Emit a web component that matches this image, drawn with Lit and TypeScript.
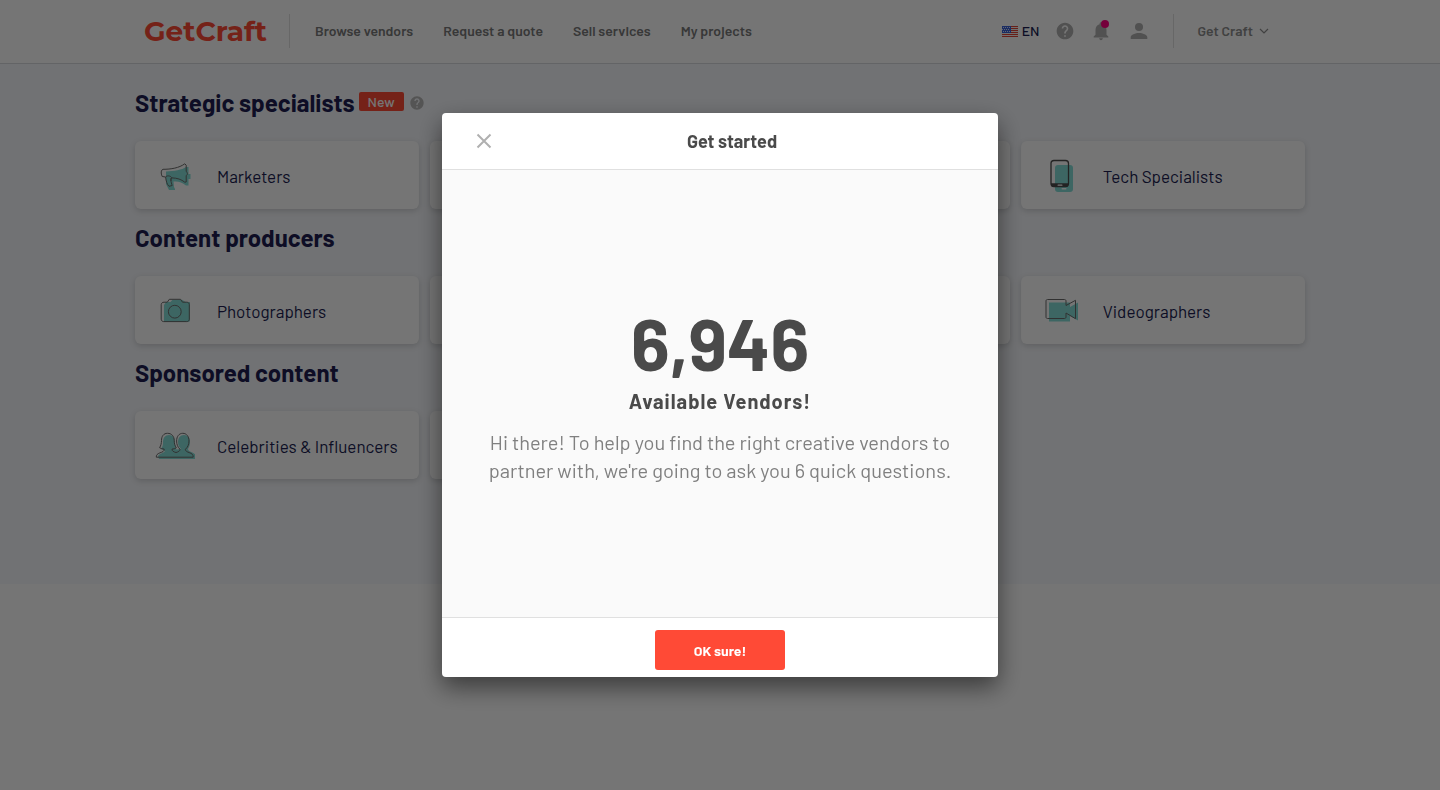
import { LitElement, html, css, svg, nothing, type TemplateResult } from "lit";
import { customElement, property } from "lit/decorators.js";

const icons: Record<string, TemplateResult> = {
  marketers: svg`
    <path class="tint" d="M11 16.5C19 16 27 15 31 12h2.5v7h2v5h-2v6.500h-2.500c-4-3.500-8-4.500-12.500-4l.5 5.500 1 2v1h-6l-3-6z"/>
    <path class="line" d="M8 14.300C16 14.300 24 13 29.800 8.800l1.400 1.400v6.300c1.600.8 1.600 3.200 0 4.200v6.300l-1.400.2c-3.300-2.700-7.800-4.300-12.800-4.300-2 1-1 4 .2 7.600l-3.200.8c-1.800-1.700-3-5-3.400-9.300M8 14.300c-2.200.6-2.300 4-.8 7.200l3.400.5c1-1.500 4.500-1.800 6.400.9M16 23v3"/>`,
  phone: svg`
    <rect class="tint" x="14" y="10" width="18" height="27" rx="3"/>
    <rect class="hole" x="20.500" y="33" width="5" height="1.600" rx=".8"/>
    <rect class="line strong" x="10" y="5.500" width="17.500" height="26" rx="3"/>
    <path class="solid" d="M10 28.200h17.500v1.300a2.600 2.600 0 0 1-2.600 2.500H12.600a2.600 2.600 0 0 1-2.600-2.500z"/>
    <rect class="hole" x="16.500" y="29.600" width="5" height="1.200" rx=".6"/>`,
  camera: svg`
    <path class="tint" d="M11 12h4.500l2-2.200h9.500l3.500 2.200h4.500v18a2 2 0 0 1-2 2H9V15z"/>
    <path class="line" d="M9 12.200h3.300l2-2.900h11.200l2 2.900h4.200c1.500 0 2.600 1 2.600 2.500v14.500c0 1.400-1.100 2.400-2.500 2.400H8.700c-1.400 0-2.500-1-2.500-2.400V14.700c0-1.500 1.200-2.500 2.800-2.500z"/>
    <circle class="line" cx="19.800" cy="21.700" r="6.400"/>`,
  video: svg`
    <path class="tint" d="M8 12.500h21v4.500l8-4.500v18l-8-4.500v5.500H8z"/>
    <path class="line" d="M6.500 9.500h17c.8 0 1.500.5 1.500 1.500v4.500l9.500-5.200v18.400L25 23v4c0 1-.7 1.500-1.500 1.500h-17c-.9 0-1.500-.5-1.500-1.500V11c0-1 .6-1.500 1.500-1.500z"/>`,
  people: svg`
    <path class="tint" d="M14 10c4 0 6 3.500 6 8 0 3 1 5 1.500 6.500l4.500-.5c-2-2-3-4-3-7 0-4 2-7 6-7s6 3 6 7c0 3-1 5-2 7 0 3 7 3 8 7 .3 1.500 0 3-1 3H4l-1-3c2-3 6-3 7-5l-4-2c2-3 2-4.500 2-7 0-4 2-7 6-7z"/>
    <path class="line" d="M12.500 8.300c-4 0-6 3-6 7.200 0 2.700-.6 5-1.900 7.200 1.300.9 3 1.300 4.600 1.300 0 2.500-1.700 3-4.400 3.900C2.500 28.800 1 30 1.300 32.200h36.900c.2-2.500-1.400-3.800-4-4.600-2.300-.8-3.700-1.400-3.800-3.300 2.300-2 3.600-4.900 3.600-8.300 0-4.500-2.400-7.700-6.200-7.700S21.600 11.500 21.600 16c0 3.400 1.200 6.300 3.400 8.200-.1 2-1.700 2.700-4 3.300-2.400-.7-4-1.300-4-3.400 1.600 0 3-.4 4.300-1.300-1.500-2.200-2.100-4.500-2.100-7.300 0-4.200-2.500-7.200-6.700-7.200z"/>`,
};

const helpPath =
  "M12 2C6.480 2 2 6.480 2 12s4.480 10 10 10 10-4.480 10-10S17.520 2 12 2zm1 17h-2v-2h2v2zm2.070-7.750l-.9.920C13.450 12.900 13 13.500 13 15h-2v-.5c0-1.100.45-2.100 1.170-2.830l1.240-1.260c.37-.36.59-.86.59-1.410 0-1.100-.9-2-2-2s-2 .9-2 2H8c0-2.210 1.790-4 4-4s4 1.790 4 4c0 .88-.36 1.680-.93 2.250z";

@customElement("category-card")
class CategoryCard extends LitElement {
  @property() label = "";
  @property() icon = "";

  static styles = css`
    :host { display: block; }
    .card {
      display: flex;
      align-items: center;
      gap: 22px;
      height: 68px;
      box-sizing: border-box;
      padding: 0 20px;
      border-radius: 6px;
      background: #fff;
      box-shadow: 0 2px 6px rgba(0, 0, 0, 0.16);
      color: #201e52;
      font-size: 17px;
      line-height: 24px;
      text-decoration: none;
      white-space: nowrap;
    }
    .text { padding-top: 1px; }
    .icon { width: 40px; height: 40px; flex: none; }
    .tint { fill: #86dfd8; }
    .line { fill: none; stroke: #6c6c6c; stroke-width: 1; stroke-linejoin: round; }
    .strong { stroke: #4c4c4c; stroke-width: 1.3; }
    .solid { fill: #4c4c4c; }
    .hole { fill: #fff; }
  `;

  render() {
    if (!this.label) return html`<div class="card"></div>`;
    return html`<a class="card" href="#">
      <svg class="icon" viewBox="0 0 40 40" aria-hidden="true">${icons[this.icon]}</svg>
      <span class="text">${this.label}</span>
    </a>`;
  }
}

interface Section {
  title: string;
  isNew?: boolean;
  cards: { label: string; icon: string }[];
}

const blank = { label: "", icon: "" };
const sections: Section[] = [
  {
    title: "Strategic specialists",
    isNew: true,
    cards: [{ label: "Marketers", icon: "marketers" }, blank, blank, { label: "Tech Specialists", icon: "phone" }],
  },
  {
    title: "Content producers",
    cards: [{ label: "Photographers", icon: "camera" }, blank, blank, { label: "Videographers", icon: "video" }],
  },
  {
    title: "Sponsored content",
    cards: [{ label: "Celebrities & Influencers", icon: "people" }, blank],
  },
];

@customElement("app-root")
class AppRoot extends LitElement {
  static styles = css`
    :host {
      display: block;
      min-height: 100vh;
      background: #fff;
      font-family: Barlow, Roboto, sans-serif;
    }
    button { font-family: inherit; border: 0; padding: 0; background: none; cursor: pointer; }
    svg { display: block; }
    .wrap { max-width: 1170px; margin: 0 auto; box-sizing: border-box; }

    .top { border-bottom: 1px solid #d8dade; }
    .bar { display: flex; align-items: center; height: 63px; padding: 0 35px 1px 9px; }
    .logo {
      min-width: 125px;
      font: 700 28px/40px Montserrat, Poppins, Lato, sans-serif;
      color: #ff4a36;
      text-decoration: none;
      padding-right: 20px;
    }
    .rule { width: 1px; height: 34px; background: #e0e0e0; }
    .nav { display: flex; gap: 30px; margin-left: 25px; flex: 1; }
    .link { font-size: 14px; line-height: 20px; font-weight: 600; color: #7a7a7a; text-decoration: none; white-space: nowrap; }
    .tools { display: flex; align-items: center; gap: 15px; }
    .tool { color: #b0b0b0; }
    .tool svg { fill: currentColor; }
    .lang { display: flex; align-items: center; gap: 4px; font-size: 14px; line-height: 20px; font-weight: 500; color: #201e52; }
    .bell { position: relative; }
    .dot { position: absolute; top: 0; right: 3px; width: 8px; height: 8px; border-radius: 50%; background: #ff0080; }
    .account {
      display: flex;
      align-items: center;
      gap: 5px;
      font-size: 14px;
      line-height: 20px;
      font-weight: 600;
      color: #8e8e8e;
    }
    .tools .rule { margin-left: 7px; }
    .tools .account { margin-left: 9px; }

    .page { background: #f6f8fc; padding: 20px 0 105px; }
    .section { margin-bottom: 10px; }
    .section:last-child { margin-bottom: 0; }
    .heading { display: flex; align-items: flex-start; gap: 4px; height: 57px; }
    .title { margin: 0; font-size: 24px; line-height: 38px; font-weight: 700; color: #201e52; }
    .badge {
      margin-top: 8px;
      width: 45px;
      border-radius: 2px;
      background: #ff4a36;
      color: #fff;
      font-size: 14px;
      line-height: 19px;
      font-weight: 500;
      text-align: center;
    }
    .hint { margin: 11px 0 0 1px; color: #b8b8b8; }
    .hint svg { fill: currentColor; }
    .grid { display: grid; grid-template-columns: repeat(4, 1fr); gap: 11px; }

    .overlay {
      position: fixed;
      inset: 0;
      display: flex;
      align-items: center;
      justify-content: center;
      background: rgba(0, 0, 0, 0.54);
    }
    .dialog {
      display: flex;
      flex-direction: column;
      width: 556px;
      max-width: 100%;
      border-radius: 4px;
      overflow: hidden;
      background: #fff;
      color: #4a4a4a;
      box-shadow: 0 10px 25px rgba(0, 0, 0, 0.5);
    }
    .head { display: flex; align-items: center; height: 56px; padding: 0 30px; border-bottom: 1px solid #e0e0e0; }
    .close { width: 24px; height: 24px; }
    .close svg { stroke: #b0b0b0; stroke-width: 2; fill: none; }
    .name { flex: 1; margin: 0; font-size: 18px; line-height: 24px; font-weight: 700; text-align: center; }
    .body { padding: 132px 46px 133px; background: #fafafa; text-align: center; }
    .count { margin: 0; font-size: 72px; line-height: 80px; font-weight: 700; }
    .caption { margin: 5px 0 0; font-size: 20px; line-height: 28px; font-weight: 700; letter-spacing: 1px; }
    .intro { margin: 13px 0 0; font-size: 20px; line-height: 28px; color: #808080; }
    .foot { display: flex; justify-content: center; padding: 12px 0 7px; border-top: 1px solid #e0e0e0; }
    .ok {
      width: 130px;
      height: 40px;
      padding-top: 2px;
      border-radius: 3px;
      background: #ff4a36;
      color: #fff;
      font-size: 14px;
      line-height: 20px;
      font-weight: 700;
    }
  `;

  private help(size: number) {
    return html`<svg width=${size} height=${size} viewBox="0 0 24 24" aria-hidden="true"><path d=${helpPath} /></svg>`;
  }

  private header() {
    return html`<header class="top">
      <div class="wrap bar">
        <a class="logo" href="#">GetCraft</a>
        <div class="rule"></div>
        <nav class="nav">
          ${["Browse vendors", "Request a quote", "Sell services", "My projects"].map(
            (item) => html`<a class="link" href="#">${item}</a>`
          )}
        </nav>
        <div class="tools">
          <button class="lang">
            <svg width="16" height="11" viewBox="0 0 16 11" aria-hidden="true">
              <rect width="16" height="11" fill="#f4f4f4" />
              <path d="M0 .5h16M0 2.500h16M0 4.500h16M0 6.500h16M0 8.500h16M0 10.500h16" stroke="#e04438" />
              <rect width="9" height="7" fill="#3c62d8" />
              <path d="M1 1.500h8M0 3.500h8M1 5.500h8" stroke="#fff" stroke-dasharray="1 1" stroke-width=".8" />
            </svg>
            EN
          </button>
          <button class="tool" aria-label="Help">${this.help(20)}</button>
          <button class="tool bell" aria-label="Notifications">
            <svg width="22" height="22" viewBox="0 0 24 24" aria-hidden="true">
              <path d="M12 22c1.100 0 2-.9 2-2h-4c0 1.100.89 2 2 2zm6-6v-5c0-3.070-1.640-5.640-4.500-6.320V4c0-.83-.67-1.500-1.500-1.500s-1.500.67-1.500 1.500v.68C7.630 5.360 6 7.920 6 11v5l-2 2v1h16v-1l-2-2z" />
            </svg>
            <span class="dot"></span>
          </button>
          <button class="tool" aria-label="Profile">
            <svg width="24" height="24" viewBox="0 0 24 24" aria-hidden="true">
              <circle cx="12" cy="8" r="4" />
              <path d="M12 14c-3.500 0-8.300 1.600-8.300 4.300V20h16.600v-1.700c0-2.700-4.800-4.300-8.300-4.300z" />
            </svg>
          </button>
          <div class="rule"></div>
          <button class="account">
            Get Craft
            <svg width="12" height="12" viewBox="0 0 12 12" aria-hidden="true">
              <path d="M2 4l4 4 4-4" fill="none" stroke="currentColor" stroke-width="1.200" />
            </svg>
          </button>
        </div>
      </div>
    </header>`;
  }

  private section(s: Section) {
    return html`<section class="section">
      <div class="heading">
        <h2 class="title">${s.title}</h2>
        ${s.isNew
          ? html`<span class="badge">New</span>
              <button class="hint" aria-label="About ${s.title}">${this.help(16)}</button>`
          : nothing}
      </div>
      <div class="grid">
        ${s.cards.map((c) => html`<category-card .label=${c.label} .icon=${c.icon}></category-card>`)}
      </div>
    </section>`;
  }

  render() {
    return html`
      ${this.header()}
      <main class="page">
        <div class="wrap">${sections.map((s) => this.section(s))}</div>
      </main>
      <div class="overlay">
        <div class="dialog" role="dialog" aria-modal="true" aria-labelledby="dialog-name">
          <div class="head">
            <button class="close" aria-label="Close">
              <svg width="24" height="24" viewBox="0 0 24 24" aria-hidden="true"><path d="M5.500 5.500l13 13M18.500 5.500l-13 13" /></svg>
            </button>
            <h1 class="name" id="dialog-name">Get started</h1>
          </div>
          <div class="body">
            <p class="count">6,946</p>
            <p class="caption">Available Vendors!</p>
            <p class="intro">
              Hi there! To help you find the right creative vendors to partner with, we're going to ask you 6 quick
              questions.
            </p>
          </div>
          <div class="foot"><button class="ok">OK sure!</button></div>
        </div>
      </div>
    `;
  }
}
